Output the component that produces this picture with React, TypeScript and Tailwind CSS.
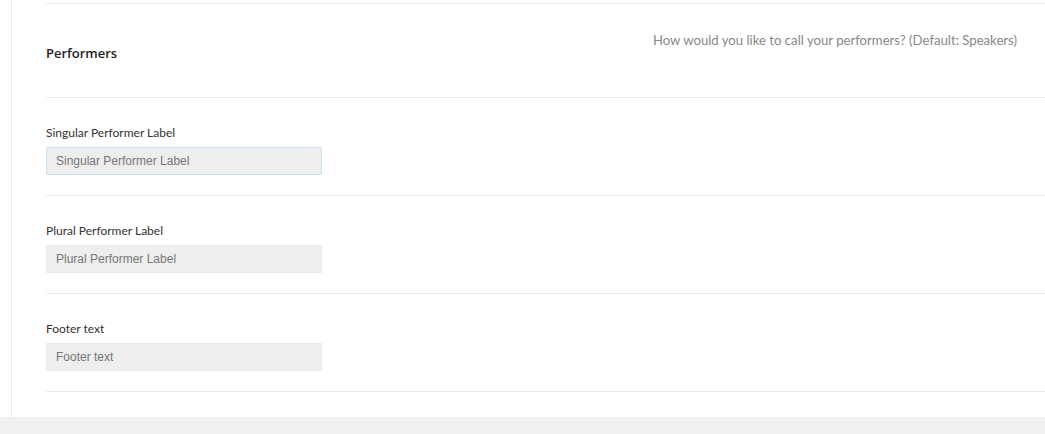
import React from "react";

const labelFont = { fontFamily: 'Lato, "Open Sans", sans-serif' };

function Field({ label, focused }: { label: string; focused?: boolean }) {
  return (
    <div className="h-[98px] border-t border-[#ebebeb] pt-[25px]">
      <div className="text-[12px] leading-[20px] text-[#333]" style={labelFont}>
        {label}
      </div>
      <input
        placeholder={label}
        className={
          "mt-[4px] block w-[276px] h-[28px] bg-[#eeeeee] pl-[9px] pr-[10px] text-[12px] text-[#555] placeholder:text-[#777] outline-none font-['Liberation_Sans',Arial,sans-serif] " +
          (focused ? "border border-[#c6e2f3] rounded-[2px]" : "border border-[#ebebeb]")
        }
      />
    </div>
  );
}

export default function App() {
  return (
    <div className="w-[1045px] h-[434px] bg-white flex flex-col overflow-hidden">
      <div className="flex-1 ml-[11px] border-l border-[#ececec] pl-[34px] pt-[3px]">
        <div className="h-[94px] border-t border-[#ebebeb] flex justify-between">
          <div
            className="pt-[39px] text-[13px] leading-[20px] font-semibold text-[#222] font-['Open_Sans',sans-serif]"
          >
            Performers
          </div>
          <div
            className="pt-[26px] pr-[28px] text-[13.15px] leading-[20px] text-[#888]"
            style={labelFont}
          >
            How would you like to call your performers? (Default: Speakers)
          </div>
        </div>
        <Field label="Singular Performer Label" focused />
        <Field label="Plural Performer Label" />
        <div className="border-b border-[#ebebeb]">
          <Field label="Footer text" />
        </div>
      </div>
      <div className="h-[17px] bg-[#f0f0f0]" />
    </div>
  );
}
